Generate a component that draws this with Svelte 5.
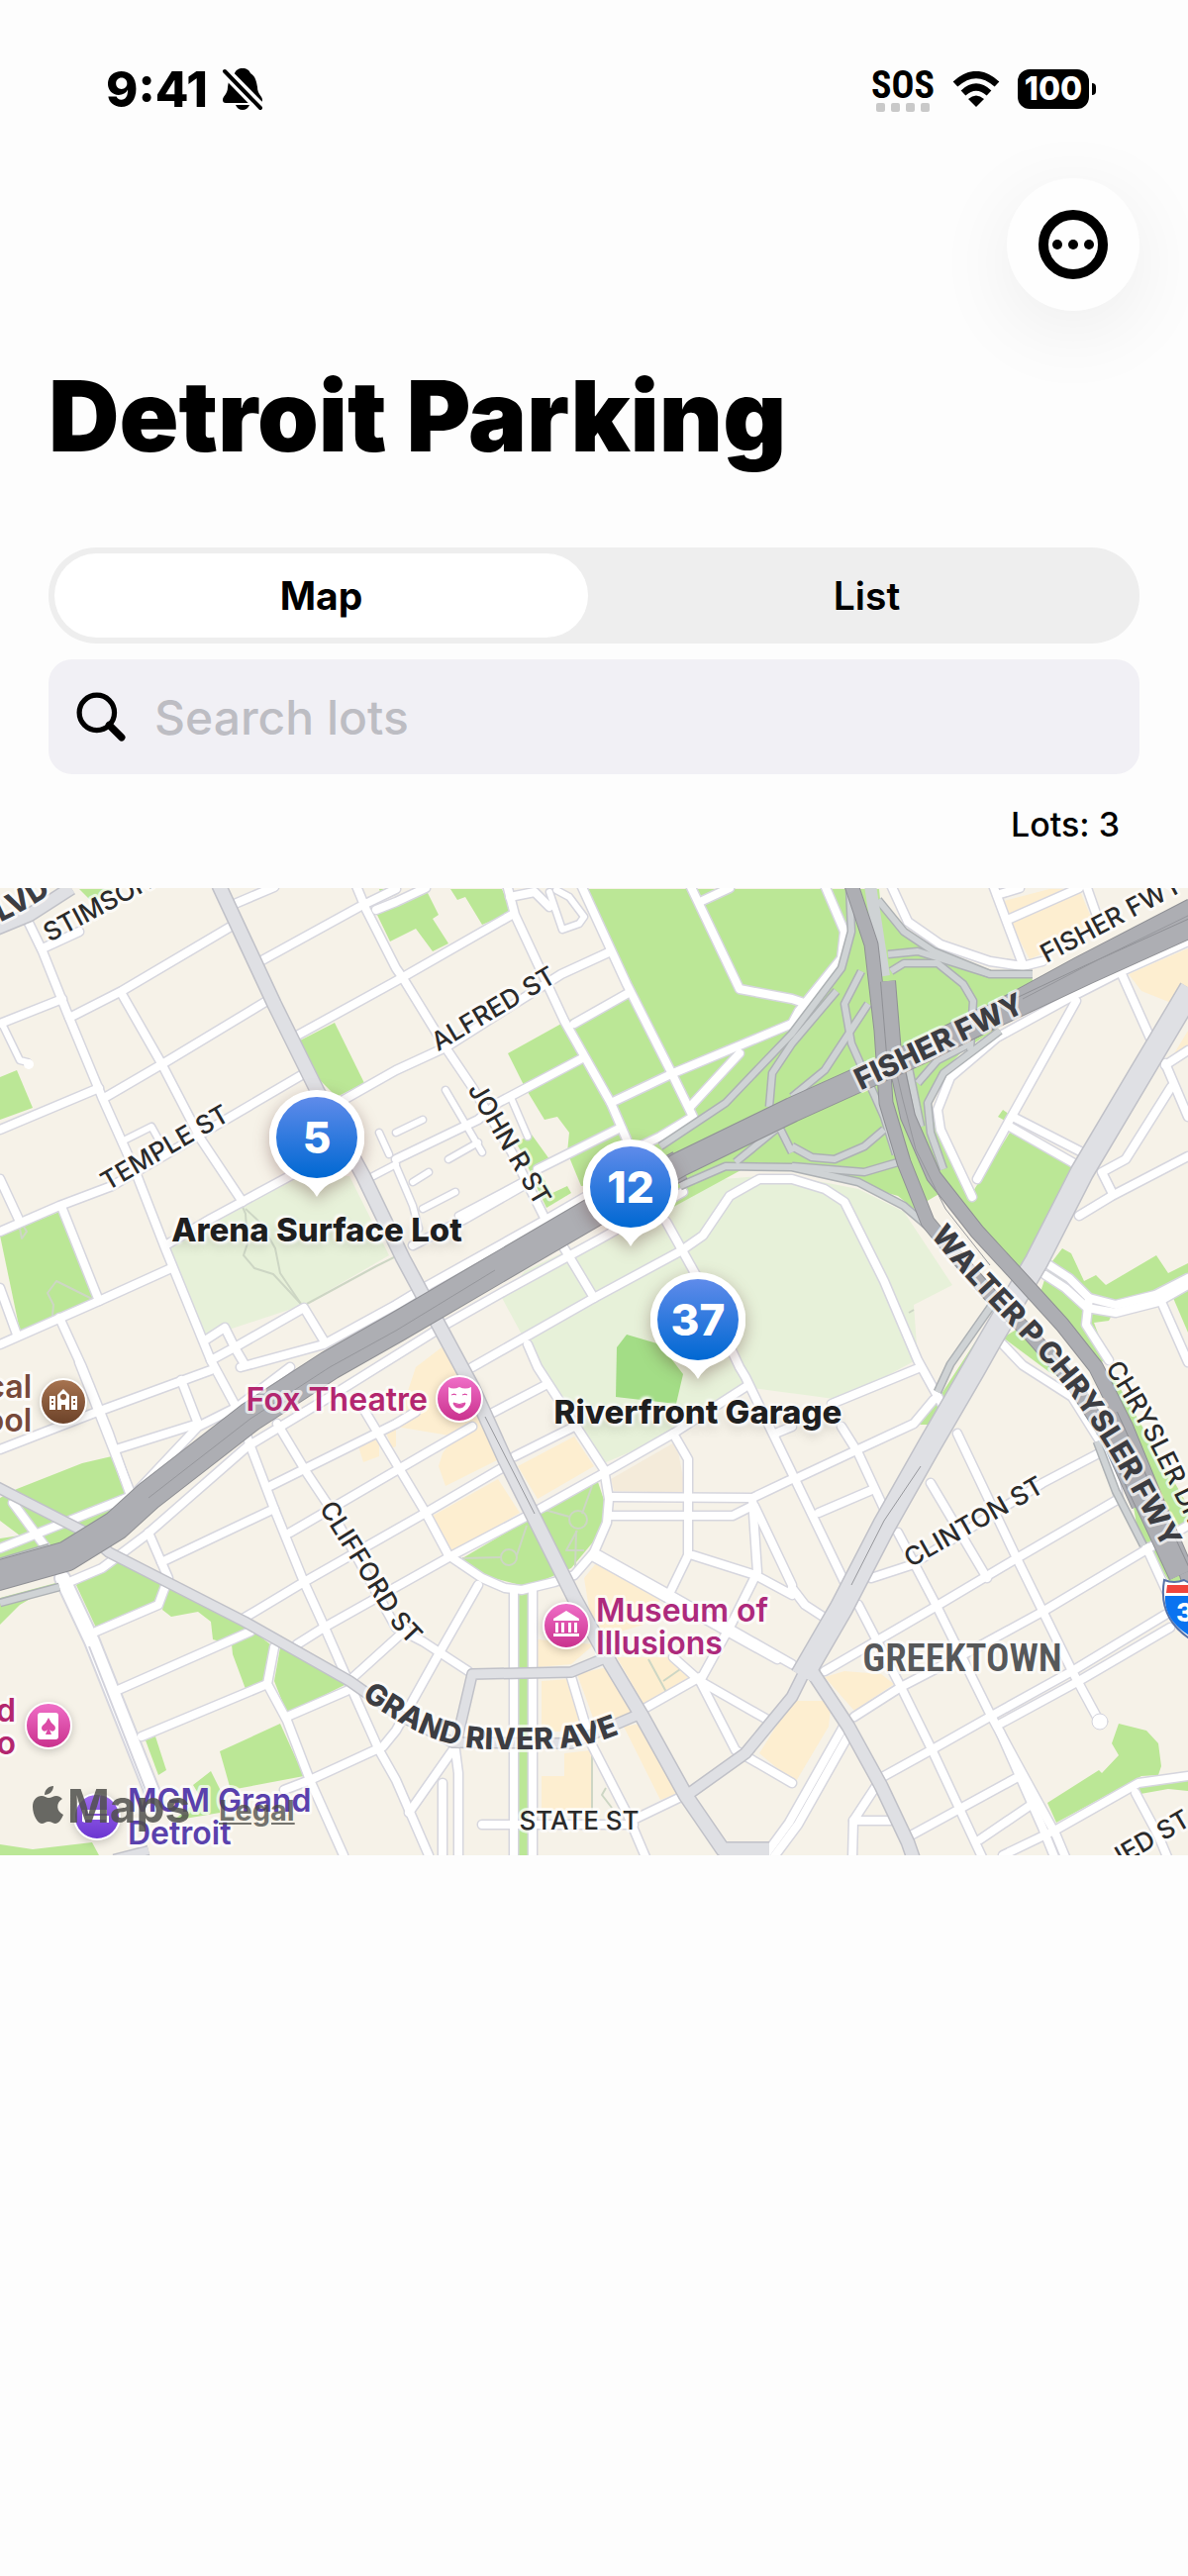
<script lang="ts">
	type Label = { id: string; text: string; d: string; size?: number; bold?: boolean; start?: boolean };

	let view = $state('map');
	let query = $state('');

	/* Map geometry shares one 1200 x 977 tile, starting at y = 896 */
	const mapTop = 896;
	const mapHeight = 977;

	const lots = [
		{ name: 'Arena Surface Lot', count: 5, x: 320, y: 1148, showName: true },
		{ name: 'Fisher Lot', count: 12, x: 637, y: 1198, showName: false },
		{ name: 'Riverfront Garage', count: 37, x: 705, y: 1332, showName: true }
	];

	const fields = [
		'170,1260 300,1187 353,1187 393,1267 307,1317 207,1350',
		'507,1310 530,1283 690,1205 730,1190 767,1187 800,1187 867,1200 913,1223 962,1297 923,1317 927,1372 850,1413 753,1400 680,1447 610,1477 527,1347'
	];

	const parks = [
		'80,897 117,897 93,910',
		'380,921 430,897 443,923 437,927 453,952 437,960 420,937 394,950',
		'383,897 400,897 400,903 386,906',
		'455,897 462,908 470,905 487,933 517,920 507,897',
		'587,897 888,897 890,917 933,953 1000,983 1040,980 1050,1010 973,1060 947,1087 937,1113 947,1143 980,1207 1020,1143 1090,1180 1033,1287 957,1200 923,1220 907,1207 800,1177 763,1173 640,1240 610,1195 587,1197 573,1163 575,1143 563,1127 550,1130 530,1097 513,1063 567,1033 634,1003',
		'521,1153 537,1145 555,1170 545,1183 558,1204 573,1197 577,1204 552,1219 543,1200 527,1163',
		'303,1050 338,1032 368,1093 340,1107 320,1087',
		'0,1087 17,1080 33,1118 0,1130',
		'0,1247 60,1223 97,1310 20,1343',
		'17,1503 83,1477 113,1470 133,1510 125,1530 60,1560 0,1580 0,1553 20,1550 0,1535 0,1512',
		'77,1600 113,1575 167,1597 160,1620 97,1643',
		'170,1600 247,1640 277,1663 267,1697 248,1705 235,1670 234,1660 215,1655 213,1637 200,1627 173,1632 164,1625',
		'283,1663 350,1700 290,1730 277,1697',
		'147,1757 157,1753 168,1787 160,1792',
		'222,1768 283,1740 307,1793 233,1807',
		'213,1788 195,1802 203,1815 175,1838 222,1830 224,1810',
		'0,1640 20,1620 60,1597 0,1613',
		'0,1862 33,1867 93,1860 100,1873 0,1873',
		'1008,1127 1013,1120 1020,1125 1017,1132',
		'1050,1307 1060,1277 1073,1260 1082,1265 1095,1293 1107,1287 1117,1297 1168,1267 1180,1285 1200,1275 1200,1290 1167,1310 1127,1320 1120,1333 1105,1335 1120,1375 1100,1373',
		'1185,1310 1200,1300 1200,1345',
		'1003,1327 985,1360 945,1438 928,1438 947,1413',
		'1013,1350 1030,1340 1080,1395 1060,1385',
		'1143,1510 1160,1520 1199,1597 1185,1602 1150,1550',
		'1110,1380 1125,1390 1200,1520 1200,1545 1185,1540',
		'1130,1740 1158,1747 1170,1760 1173,1783 1170,1792 1153,1793 1067,1840 1058,1820 1110,1787 1113,1790 1130,1772 1123,1760',
		'1150,1800 1200,1793 1200,1808 1180,1806 1152,1811',
		'467,1573 603,1493 612,1520 607,1547 577,1583 533,1602 487,1590',
		'523,1605 533,1605 533,1873 523,1873'
	];

	const shops = [
		'400,1440 420,1380 450,1357 480,1400 510,1470 450,1500 443,1480 447,1467 460,1450',
		'437,1530 503,1493 525,1527 457,1567',
		'523,1480 580,1450 600,1480 543,1513',
		'590,1593 603,1577 670,1610 650,1640 600,1655',
		'543,1655 600,1660 577,1680 543,1683',
		'583,1690 613,1683 643,1730 603,1745',
		'547,1697 575,1695 590,1748 547,1748',
		'570,1770 597,1767 598,1827 547,1827 547,1793 570,1793',
		'630,1743 647,1740 687,1810 667,1817',
		'623,1673 683,1673 700,1693 650,1720',
		'360,1453 383,1450 383,1470 367,1476',
		'388,1440 400,1430 400,1460 396,1462',
		'1010,910 1060,897 1090,897 1107,937 1040,968 1020,930',
		'1140,983 1200,957 1200,1000 1183,1012 1153,1000',
		'1200,1040 1180,1073 1200,1062',
		'833,1693 853,1687 890,1690 903,1700 863,1727',
		'767,1770 800,1717 840,1717 837,1743 803,1800'
	];

	const streets = [
		'27,927 43,960 67,1020 103,1107 137,1183 167,1260 213,1373 240,1423 253,1460 277,1523 307,1597 328,1643 353,1700 383,1767 400,1797 433,1873',
		'123,1003 163,1073 203,1150 245,1213',
		'43,957 80,940',
		'70,1027 123,1000 233,935',
		'0,1033 63,1008',
		'107,1107 167,1072 273,1008',
		'0,1140 100,1098',
		'0,1243 60,1217 113,1197 233,1127 308,1083',
		'237,912 277,895',
		'263,970 363,915 400,897',
		'380,918 400,910 430,896',
		'360,894 370,918 400,977 407,987 450,1057 477,1097 517,1163 553,1235 570,1260 600,1310',
		'300,1045 400,990 517,923',
		'347,1110 400,1080 450,1057 567,983 617,960',
		'167,1257 213,1230 300,1183',
		'63,1220 100,1313',
		'0,1357 100,1313 173,1280',
		'0,1190 20,1233',
		'0,1300 17,1347',
		'60,1330 83,1380 110,1447 133,1513',
		'207,1353 227,1340 237,1360 213,1373',
		'237,1360 307,1320 327,1353',
		'237,1360 247,1377',
		'243,1380 327,1357 400,1317 433,1297 553,1230 610,1197',
		'513,896 520,923 570,1030 617,1113 633,1150',
		'515,905 540,900 555,915',
		'587,893 633,993 677,1080 700,1127 667,1147 640,1160',
		'697,893 747,998 800,1008 812,1012',
		'617,1113 680,1083 800,1033 807,1020 850,967 853,940 833,893',
		'747,1063 697,1117',
		'580,1033 633,1003',
		'400,1170 483,1130 503,1113 590,1067',
		'543,1180 623,1140',
		'707,910 737,896',
		'417,1257 470,1230 540,1190',
		'450,1337 510,1303 607,1250 690,1203',
		'477,1380 600,1310 687,1263 710,1247 737,1207 767,1190 800,1190 833,1200 853,1213 893,1293 927,1373 953,1420',
		'673,1233 703,1287 747,1380 753,1390 800,1487 853,1597',
		'533,1357 543,1380 610,1483 615,1513 613,1537 600,1567 580,1590 560,1597 527,1605 510,1603 487,1593 453,1570 430,1527 400,1477 360,1410',
		'280,1437 310,1487 330,1517 400,1643 427,1657 473,1687',
		'0,1463 93,1427 213,1383',
		'117,1463 200,1437',
		'183,1393 200,1437',
		'80,1375 133,1510',
		'137,1507 200,1440 240,1420 293,1380',
		'70,1597 103,1583 147,1550 250,1460 333,1410 450,1337',
		'0,1563 133,1510',
		'13,1517 47,1563',
		'163,1577 277,1523',
		'150,1547 170,1593 160,1620 97,1647',
		'273,1500 400,1437 420,1425',
		'293,1547 430,1467 477,1440',
		'247,1633 307,1597 430,1527 510,1480',
		'300,1660 327,1643 457,1570 533,1530 610,1487 680,1447 753,1400',
		'520,1470 580,1440',
		'490,1430 553,1397',
		'357,1693 410,1645',
		'117,1707 253,1647',
		'143,1753 270,1700',
		'277,1663 270,1700 290,1737 313,1797 347,1873',
		'290,1733 350,1707',
		'287,1807 313,1797 387,1763 400,1747 443,1670 483,1600',
		'900,893 917,930 950,953 1000,970 1033,975 1053,970',
		'1003,893 1033,973',
		'1007,903 1030,896',
		'1020,927 1090,896',
		'1097,893 1110,930',
		'1200,950 1133,980 1080,1007 1007,1047 960,1087 947,1120 950,1140 982,1208',
		'1087,1010 1020,1130 987,1190',
		'1133,983 1163,1050',
		'1023,1127 1097,1165',
		'1020,1137 1090,1177',
		'1177,1073 1200,1127',
		'1177,1075 1200,1060',
		'1183,1097 1137,1170 1113,1183 1123,1203',
		'1090,1227 1123,1207 1200,1167',
		'1060,1277 1080,1290 1100,1310 1127,1317 1167,1307 1200,1290',
		'1056,1287 1076,1300 1098,1320 1127,1325 1170,1314 1200,1297',
		'1100,1310 1097,1337 1120,1373',
		'1170,1307 1200,1375',
		'1013,1357 1033,1378 1083,1410 1110,1453 1127,1497 1130,1513 1027,1573 943,1623 833,1687',
		'880,1593 920,1580 1053,1497 1110,1467',
		'863,1733 910,1703 987,1663 1053,1627 1160,1563 1200,1540',
		'893,1793 940,1767 1000,1733 1083,1687 1177,1630',
		'1007,1742 1088,1698 1182,1643',
		'920,1853 1030,1793',
		'990,1857 1040,1823',
		'1013,1873 1067,1847 1150,1800 1200,1793',
		'967,1447 1027,1573 1083,1687 1110,1737',
		'940,1497 997,1593',
		'907,1547 947,1623 1000,1730 1027,1780 1067,1853 1077,1877',
		'1010,1748 1053,1845 1066,1877',
		'867,1620 910,1703 943,1770 993,1877',
		'850,1440 867,1467 893,1523',
		'803,1493 867,1463 923,1437 943,1413',
		'840,1417 930,1380',
		'827,1527 883,1503',
		'800,1603 813,1620 833,1633',
		'862,1838 903,1838',
		'861,1877 862,1838 887,1800',
		'852,1743 797,1840 770,1877',
		'858,1750 806,1842 780,1877',
		'1158,1562 1180,1610',
		'1147,1810 1170,1853 1180,1877',
		'617,1511 760,1512 800,1493',
		'617,1530 740,1530 760,1520',
		'680,1447 695,1473 695,1570 677,1607',
		'700,1570 763,1590 800,1610',
		'760,1513 765,1587 740,1637 707,1697',
		'762,1520 800,1600',
		'600,1567 677,1610 800,1680',
		'600,1572 677,1615 785,1675',
		'680,1673 707,1697 743,1767 800,1800',
		'707,1697 777,1737',
		'647,1727 707,1693',
		'577,1693 597,1760 633,1830 653,1877',
		'640,1837 690,1813',
		'487,1842 640,1842',
		'519,1605 519,1877',
		'538,1605 538,1877',
		'413,1830 460,1763',
		'460,1767 463,1790 463,1877',
		'447,1800 447,1877',
		'783,1447 800,1440'
	];

	const alleys = [
		'3,1035 20,1070 28,1072',
		'127,1150 153,1137 163,1155',
		'450,1100 487,1163',
		'453,1170 483,1153',
		'400,1143 427,1130',
		'400,1177 417,1217 423,1240',
		'417,1193 433,1183',
		'427,1220 460,1203',
		'517,1110 533,1147',
		'463,1227 527,1193',
		'383,1143 393,1165',
		'377,1187 400,1175',
		'555,900 568,938 585,932 590,925 575,905 562,898'
	];

	const avenues = [
		{ points: '-4,937 30,923 72,896', width: 12 },
		{ points: '221,893 277,1013 320,1100 367,1187 407,1270 443,1337 477,1400 510,1473 540,1533 580,1613 617,1680 647,1730 693,1813 730,1867 777,1867', width: 13 },
		{ points: '-3,1501 87,1547 110,1567 247,1637 353,1697 400,1730 457,1759 577,1760 647,1730', width: 9 },
		{ points: '460,1763 477,1690 577,1688 613,1673', width: 9 },
		{ points: '813,1687 800,1713 753,1770 697,1810', width: 10 },
		{ points: '820,1687 857,1743 890,1803 917,1860 924,1880', width: 12 },
		{ points: '1203,998 1150,1087 1093,1183 1047,1273 1000,1353 983,1383 940,1457 893,1540 850,1623 810,1692', width: 22 },
		{ points: '115,1877 150,1868', width: 8 }
	];

	const ramps = [
		'667,1157 733,1113 800,1043 850,977 860,940 858,893',
		'777,1117 780,1083 800,1053 845,1000',
		'887,908 913,940 943,960 1000,983 1043,983',
		'897,963 927,960 1000,983',
		'900,980 913,972 947,972 973,993 983,1010 980,1060',
		'870,980 853,1013 860,1053 893,1127 905,1165',
		'877,1013 833,1080 800,1107',
		'800,1157 820,1168 843,1170 873,1157 893,1140',
		'800,1177 873,1183 907,1173',
		'687,1197 733,1177 800,1178 867,1193 913,1217 940,1240',
		'743,1173 787,1137 800,1163',
		'927,1093 947,1070 980,1053',
		'1010,1040 953,1083 937,1113 940,1143 953,1180',
		'917,1073 930,1137',
		'1007,1310 960,1377 947,1405',
		'0,1577 50,1562',
		'0,1618 60,1602',
		'1108,1455 1127,1505 1155,1560'
	];

	const freeways = [
		{ points: '860,893 880,953 890,1040 895,1113 913,1173 937,1233 960,1261 1000,1307 1040,1346 1083,1395 1120,1453 1150,1520', width: 13 },
		{ points: '897,990 903,1063 917,1127 943,1187 987,1243 1033,1293 1073,1337 1107,1380 1137,1440 1167,1513 1197,1583 1215,1640', width: 14 },
		{ points: '1118,1430 1150,1500 1192,1590', width: 22 },
		{ points: '-4,1591 67,1571 117,1540 150,1510 253,1430 333,1378 400,1340 600,1223 687,1176', width: 29 },
		{ points: '940,1055 1000,1024 1090,975 1204,916', width: 18 },
		{ points: '940,1059 1000,1030 1100,983 1204,936', width: 18 },
		{ points: '675,1182 687,1175 800,1120 933,1060 1000,1026', width: 24 }
	];

	const footpaths = [
		'245,1218 248,1225 250,1255 246,1267 257,1280 276,1286 304,1316',
		'248,1220 264,1235 278,1260 283,1285 304,1316',
		'310,1316 380,1278 400,1268',
		'53,1328 54,1317 48,1305 57,1293 93,1311',
		'20,1240 22,1250 27,1243 24,1238',
		'467,1573 506,1572',
		'522,1570 532,1540',
		'550,1524 575,1531',
		'588,1528 598,1500',
		'582,1545 581,1583',
		'583,1545 572,1565 590,1565',
		'655,1675 673,1708',
		'670,1697 690,1683',
		'598,1770 598,1827',
		'612,1805 608,1812 618,1825',
		'923,1322 918,1325'
	];

	const seams = [
		'150,1512 253,1432 333,1380 400,1343 500,1282',
		'1033,1008 1110,968 1204,922',
		'905,1080 912,1110 925,1160 955,1220 1000,1277',
		'930,1480 893,1535 860,1600',
		'490,1430 540,1528'
	];

	const labels: Label[] = [
		{ id: 'blvd', text: 'BLVD', d: 'M-18,938 Q30,920 85,878', size: 30, bold: true, start: true },
		{ id: 'stimson', text: 'STIMSON', d: 'M50,951 L190,876', start: true },
		{ id: 'temple', text: 'TEMPLE ST', d: 'M102,1206 L240,1126' },
		{ id: 'alfred', text: 'ALFRED ST', d: 'M436,1065 L570,986' },
		{ id: 'john', text: 'JOHN R ST', d: 'M469,1094 L545,1224' },
		{ id: 'clifford', text: 'CLIFFORD ST', d: 'M317,1514 L385,1624 Q397,1645 422,1668' },
		{ id: 'clinton', text: 'CLINTON ST', d: 'M914,1586 L1062,1502' },
		{ id: 'fisher-dr', text: 'FISHER FWY', d: 'M1057,972 L1225,883', start: true },
		{ id: 'fisher', text: 'FISHER FWY', d: 'M858,1106 L1048,1015', size: 30, bold: true },
		{ id: 'chrysler', text: 'WALTER P CHRYSLER FWY', d: 'M930,1234 C985,1308 1040,1350 1085,1412 S1150,1520 1184,1578', size: 30, bold: true },
		{ id: 'chrysler-dr', text: 'CHRYSLER DR', d: 'M1116,1381 C1150,1430 1175,1485 1225,1590', start: true },
		{ id: 'grand-river', text: 'GRAND RIVER AVE', d: 'M352,1705 C400,1738 440,1766 500,1766 S590,1768 640,1744', size: 30, bold: true },
		{ id: 'state', text: 'STATE ST', d: 'M510,1847 L660,1847' },
		{ id: 'alfred-east', text: 'IED ST', d: 'M1133,1883 L1240,1821', start: true }
	];
</script>

<div class="screen">
	<div class="status-bar">
		<div class="status-group">
			<span class="time">9:41</span>
			<svg class="bell" viewBox="0 0 42 44" aria-label="Silent">
				<path
					d="M21 1c4 0 7 2 8 5 5 3 6 8 7 14 0 7 5 9 5 13 0 2-1 3-3 3H4c-2 0-3-1-3-3 0-4 5-6 5-13 1-6 2-11 7-14 1-3 4-5 8-5zM14 38h14c-1 3-4 5-7 5s-6-2-7-5z"
				/>
				<path d="M0 1 44 46" class="bell-gap" />
				<path d="M3 4 39 41" class="bell-slash" />
			</svg>
		</div>
		<div class="status-group signals">
			<div class="sos">
				<span>SOS</span>
				<div class="dots"><i></i><i></i><i></i><i></i></div>
			</div>
			<svg class="wifi" viewBox="0 0 48 37" aria-label="Wi-Fi">
				<path d="M3 13Q24-6 45 13" />
				<path d="M11 22Q24 10 37 22" />
				<path d="M24 36 16 28Q24 21 32 28z" class="solid" />
			</svg>
			<div class="battery"><span>100</span></div>
		</div>
	</div>

	<div class="toolbar">
		<button class="more" aria-label="More">
			<svg viewBox="0 0 72 72">
				<circle cx="36" cy="36" r="30" class="ring" />
				<circle cx="20" cy="36" r="5" />
				<circle cx="36" cy="36" r="5" />
				<circle cx="52" cy="36" r="5" />
			</svg>
		</button>
	</div>

	<h1>Detroit Parking</h1>

	<div class="controls">
		<div class="segments">
			<button class:active={view === 'map'} onclick={() => (view = 'map')}>Map</button>
			<button class:active={view === 'list'} onclick={() => (view = 'list')}>List</button>
		</div>
		<label class="search">
			<svg viewBox="0 0 48 48" aria-hidden="true">
				<circle cx="20" cy="20" r="17" />
				<path d="M32 32 44 44" class="handle" />
			</svg>
			<input type="text" placeholder="Search lots" aria-label="Search lots" bind:value={query} />
		</label>
		<p class="lot-count">Lots: {lots.length}</p>
	</div>

	<div class="map">
		<svg class="tile" viewBox="0 {mapTop} 1200 {mapHeight}">
			<defs>
				<linearGradient id="pink" x1="0" y1="0" x2="0" y2="1">
					<stop offset="0" stop-color="#f06fc8" />
					<stop offset="1" stop-color="#c9308c" />
				</linearGradient>
				<linearGradient id="brown" x1="0" y1="0" x2="0" y2="1">
					<stop offset="0" stop-color="#a87450" />
					<stop offset="1" stop-color="#6b4128" />
				</linearGradient>
				<linearGradient id="purple" x1="0" y1="0" x2="0" y2="1">
					<stop offset="0" stop-color="#a06cf0" />
					<stop offset="1" stop-color="#6a34d0" />
				</linearGradient>
				{#each labels as label}
					<path id={label.id} d={label.d} />
				{/each}
			</defs>

			<rect x="0" y={mapTop} width="1200" height={mapHeight} fill="#f6f2e8" />

			{#each fields as points}
				<polygon {points} fill="#e7f1d9" />
			{/each}
			<polygon points="617,1493 683,1455 693,1507 620,1505" fill="#f4ebda" />
			{#each shops as points}
				<polygon {points} fill="#fdeed0" />
			{/each}
			{#each parks as points}
				<polygon {points} fill="#bbe796" />
			{/each}
			<polygon points="633,1347 667,1357 690,1387 683,1417 622,1410 623,1360" fill="#a3dd86" />
			<g class="footpaths">
				{#each footpaths as points}
					<polyline {points} />
				{/each}
				<circle cx="514" cy="1572" r="8" />
				<circle cx="584" cy="1534" r="9" />
			</g>

			<g class="casing">
				{#each alleys as points}
					<polyline {points} stroke-width="9" />
				{/each}
				{#each streets as points}
					<polyline {points} stroke-width="11" />
				{/each}
				<polyline points="63,1593 93,1657 158,1820" stroke-width="18" />
			</g>
			<g class="street">
				{#each alleys as points}
					<polyline {points} stroke-width="6" />
				{/each}
				{#each streets as points}
					<polyline {points} stroke-width="8" />
				{/each}
				<polyline points="63,1593 93,1657 158,1820" stroke-width="14" />
				<circle cx="1111" cy="1738" r="8" fill="#fff" stroke="#d3d3dc" />
				<circle cx="29" cy="1074" r="5" fill="#fff" stroke="none" />
			</g>
			<polyline points="90,1662 152,1820" fill="none" stroke="#d3d3dc" stroke-width="2" />

			<g class="avenue-casing">
				{#each avenues as road}
					<polyline points={road.points} stroke-width={road.width + 3} />
				{/each}
			</g>
			<g class="avenue">
				{#each avenues as road}
					<polyline points={road.points} stroke-width={road.width} />
				{/each}
			</g>

			<g class="ramp-casing">
				{#each ramps as points}
					<polyline {points} />
				{/each}
			</g>
			<g class="ramp">
				{#each ramps as points}
					<polyline {points} />
				{/each}
				<polyline points="879,893 893,985" stroke-width="12" />
			</g>

			{#each freeways as road}
				<polyline points={road.points} class="freeway-edge" stroke-width={road.width + 2} />
				<polyline points={road.points} class="freeway" stroke-width={road.width} />
			{/each}
			<g class="seams">
				{#each seams as points}
					<polyline {points} />
				{/each}
			</g>

			{#each labels as label}
				<text class="road-label" class:bold={label.bold} font-size={label.size ?? 26}>
					<textPath
						href="#{label.id}"
						startOffset={label.start ? '0%' : '50%'}
						text-anchor={label.start ? 'start' : 'middle'}>{label.text}</textPath
					>
				</text>
			{/each}
			<text class="district" x="972" y="1687" text-anchor="middle">GREEKTOWN</text>

			<g class="shield">
				<path
					d="M1176 1595q10 4 20 0 8 5 20 5 12 0 20-5 8 5 20 0 10 42-40 67-48-22-40-67z"
					fill="#fff"
					stroke="#5873a8"
					stroke-width="2"
				/>
				<path d="M1179 1600h80v8h-81z" fill="#f0443c" />
				<path d="M1177 1611h84q-1 32-42 49-44-18-42-49z" fill="#0a73f0" />
				<text x="1188" y="1637">375</text>
			</g>

			<g class="poi">
				<circle cx="64" cy="1415" r="23" fill="url(#brown)" />
				<path
					d="M50 1409h6v14h-6zM72 1409h6v14h-6zM58 1423v-15l6-6 6 6v15h-4v-5h-4v5z"
					fill="#fff"
				/>
				<circle cx="64" cy="1410" r="3" fill="#8a5a3c" />
				<path d="M52 1413h2M52 1417h2M74 1413h2M74 1417h2" stroke="#8a5a3c" stroke-width="2" />
				<text x="32" y="1411" text-anchor="end" fill="#77493a">cal</text>
				<text x="32" y="1445" text-anchor="end" fill="#77493a">ool</text>

				<circle cx="464" cy="1412" r="23" fill="url(#pink)" />
				<path d="M453 1400q5 3 11 0 6 3 12 0v14q-1 9-12 13-10-4-11-13z" fill="#fff" />
				<path
					d="M456 1408q3-2 5 0M467 1408q3-2 5 0M458 1416q6 3 12 0-1 5-6 5-5 0-6-5z"
					fill="#dc4aa6"
					stroke="#dc4aa6"
				/>
				<text x="432" y="1424" text-anchor="end" fill="#b3266f">Fox Theatre</text>

				<circle cx="572" cy="1641" r="23" fill="url(#pink)" />
				<path
					d="M559 1634 572 1626l13 8v2h-26zM561 1638h3v10h-3zM567 1638h3v10h-3zM574 1638h3v10h-3zM580 1638h3v10h-3zM559 1649h26v3h-26z"
					fill="#fff"
				/>
				<text x="602" y="1637" fill="#ad2a7c">Museum of</text>
				<text x="602" y="1670" fill="#ad2a7c">Illusions</text>

				<circle cx="49" cy="1742" r="23" fill="url(#pink)" />
				<rect x="38" y="1729" width="21" height="27" rx="3" fill="#fff" />
				<path
					d="M49 1734q2 5 6 8c3 4-2 8-5 4l2 5h-6l2-5c-3 4-8 0-5-4q4-3 6-8z"
					fill="#dc4aa6"
				/>
				<text x="16" y="1738" text-anchor="end" fill="#b3266f">d</text>
				<text x="16" y="1771" text-anchor="end" fill="#b3266f">o</text>

				<circle cx="98" cy="1834" r="23" fill="url(#purple)" />
				<path d="M83 1839v-12h3v6h24v7h-3v-3H86v3zM88 1827h20v4H88z" fill="#fff" />
				<text x="129" y="1829" fill="#5a41ad">MGM Grand</text>
				<text x="129" y="1862" fill="#5a41ad">Detroit</text>
			</g>

			<g class="attribution">
				<path
					d="M54 1803c0 5-4 9-9 9 0-5 4-9 9-9zM49 1815c3 0 5-2 8-2 2 0 4 1 6 3-7 4-6 13 1 16-2 5-5 9-8 9-2 0-4-2-7-2s-4 2-7 2c-4 0-9-9-9-17 0-7 4-11 9-11 3 0 5 2 7 2z"
				/>
				<text x="68" y="1840">Maps</text>
			</g>
		</svg>

		<a class="legal" href="#legal">Legal</a>

		{#each lots as lot}
			<button
				class="pin"
				aria-label={lot.name}
				style="left: {lot.x / 12}%; top: {((lot.y - mapTop) / mapHeight) * 100}%"
			>
				<svg viewBox="0 0 96 112" aria-hidden="true">
					<path d="M48 0a48 48 0 0 1 17 93q-10 3-17 15-7-12-17-15A48 48 0 0 1 48 0z" />
				</svg>
				<span class="count">{lot.count}</span>
				{#if lot.showName}
					<span class="lot-name">{lot.name}</span>
				{/if}
			</button>
		{/each}
	</div>
</div>

<style>
	:global(body) {
		margin: 0;
		background: #fdfdfd;
	}

	.screen {
		min-height: 100vh;
		background: #fdfdfd;
		color: #000;
		font-family: Inter, 'Liberation Sans', sans-serif;
	}

	button {
		border: 0;
		padding: 0;
		background: none;
		color: inherit;
		font-family: inherit;
		cursor: pointer;
	}

	.status-bar {
		display: flex;
		justify-content: space-between;
		align-items: center;
		height: 180px;
		padding: 0 93px 0 107px;
		box-sizing: border-box;
	}

	.status-group {
		display: flex;
		align-items: center;
		gap: 14px;
	}

	.signals {
		gap: 18px;
	}

	.time {
		font-size: 49px;
		font-weight: 800;
	}

	.bell {
		width: 42px;
		height: 44px;
	}

	.bell-gap {
		stroke: #fdfdfd;
		stroke-width: 11;
	}

	.bell-slash {
		stroke: #000;
		stroke-width: 4;
		stroke-linecap: round;
	}

	.sos {
		display: flex;
		flex-direction: column;
		align-items: center;
		font-family: 'Liberation Sans Narrow', 'Roboto Condensed', Roboto, sans-serif;
		font-size: 38px;
		font-weight: 700;
		line-height: 36px;
	}

	.dots {
		display: flex;
		gap: 6px;
	}

	.dots i {
		width: 9px;
		height: 9px;
		border-radius: 2px;
		background: #c9c9c9;
	}

	.wifi {
		width: 48px;
		height: 37px;
		fill: none;
		stroke: #000;
		stroke-width: 7;
	}

	.wifi .solid {
		fill: #000;
		stroke: none;
	}

	.battery {
		position: relative;
		width: 72px;
		height: 40px;
		margin-right: 7px;
		border-radius: 12px;
		background: #000;
		color: #fff;
		font-size: 32px;
		font-weight: 800;
		line-height: 40px;
		text-align: center;
	}

	.battery::after {
		content: '';
		position: absolute;
		top: 14px;
		right: -7px;
		width: 4px;
		height: 12px;
		border-radius: 0 4px 4px 0;
		background: #000;
	}

	.toolbar {
		display: flex;
		justify-content: flex-end;
		padding: 0 49px;
	}

	.more {
		display: grid;
		place-items: center;
		width: 134px;
		height: 134px;
		border-radius: 50%;
		background: #fefefe;
		box-shadow: 0 18px 84px rgba(0, 0, 0, 0.07);
	}

	.more svg {
		width: 72px;
		height: 72px;
	}

	.ring {
		fill: none;
		stroke: #000;
		stroke-width: 10;
	}

	h1 {
		margin: 46px 49px 0;
		font-size: 99px;
		font-weight: 900;
		line-height: 120px;
	}

	.controls {
		display: flex;
		flex-direction: column;
		gap: 16px;
		margin: 73px 49px 0;
	}

	.segments {
		display: grid;
		grid-template-columns: 1fr 1fr;
		gap: 12px;
		height: 97px;
		padding: 6px;
		box-sizing: border-box;
		border-radius: 48px;
		background: #eee;
	}

	.segments button {
		border-radius: 43px;
		font-size: 39px;
		font-weight: 600;
	}

	.segments .active {
		background: #fff;
		font-weight: 700;
	}

	.search {
		display: flex;
		align-items: center;
		gap: 29px;
		height: 116px;
		padding: 0 28px;
		box-sizing: border-box;
		border-radius: 24px;
		background: #f1f0f5;
	}

	.search svg {
		flex: none;
		width: 50px;
		height: 50px;
		fill: none;
		stroke: #000;
		stroke-width: 5;
		stroke-linecap: round;
	}

	.search .handle {
		stroke-width: 7;
	}

	.search input {
		flex: 1;
		min-width: 0;
		border: 0;
		padding: 0;
		outline: 0;
		background: none;
		font-family: inherit;
		font-size: 48px;
		font-weight: 500;
	}

	.search input::placeholder {
		color: #bdbdc3;
	}

	.lot-count {
		margin: 15px 20px 44px;
		font-size: 34px;
		font-weight: 500;
		line-height: 40px;
		text-align: right;
	}

	.map {
		position: relative;
		overflow: hidden;
	}

	.tile {
		display: block;
		width: 100%;
		height: auto;
	}

	.footpaths,
	.casing,
	.street,
	.avenue-casing,
	.avenue,
	.ramp-casing,
	.ramp,
	.seams {
		fill: none;
		stroke-linejoin: round;
	}

	.footpaths {
		stroke: #cdd6c4;
		stroke-width: 2;
	}

	.casing,
	.street {
		stroke: #d6d6de;
		stroke-linecap: round;
	}

	.street {
		stroke: #fff;
	}

	.avenue-casing {
		stroke: #c0c1c8;
	}

	.avenue {
		stroke: #dfe0e4;
	}

	.ramp-casing {
		stroke: #adb1b4;
		stroke-width: 9;
	}

	.ramp {
		stroke: #cfd3d5;
		stroke-width: 6;
	}

	.freeway-edge,
	.freeway {
		fill: none;
		stroke: #8f9095;
		stroke-linejoin: round;
	}

	.freeway {
		stroke: #adaeb3;
	}

	.seams {
		stroke: #96979c;
		stroke-width: 1;
	}

	.road-label,
	.district,
	.poi text {
		paint-order: stroke;
		stroke: rgba(255, 255, 255, 0.7);
		stroke-width: 6px;
		stroke-linejoin: round;
	}

	.road-label {
		fill: #2a2a2a;
		font-weight: 500;
	}

	.road-label.bold {
		fill: #3c3d42;
		font-weight: 800;
	}

	.district {
		fill: #56585a;
		font-family: 'Roboto Condensed', Roboto, sans-serif;
		font-size: 39px;
		font-weight: 600;
	}

	.shield text {
		fill: #fff;
		font-size: 26px;
		font-weight: 800;
	}

	.poi > circle[r='23'] {
		stroke: #fff;
		stroke-width: 2;
		filter: drop-shadow(0 2px 4px rgba(0, 0, 0, 0.2));
	}

	.poi text {
		font-size: 32px;
		font-weight: 600;
	}

	.attribution {
		fill: #50504c;
		opacity: 0.85;
		font-size: 46px;
		font-weight: 700;
	}

	.legal {
		position: absolute;
		bottom: 28px;
		left: 221px;
		color: rgba(72, 72, 68, 0.75);
		font-size: 29px;
		font-weight: 700;
		line-height: 34px;
	}

	.pin {
		position: absolute;
		width: 96px;
		height: 96px;
		margin: -48px 0 0 -48px;
	}

	.pin svg {
		position: absolute;
		top: 0;
		left: 0;
		width: 96px;
		height: 112px;
		fill: #fff;
		filter: drop-shadow(0 5px 8px rgba(80, 40, 40, 0.35));
	}

	.count {
		position: relative;
		display: grid;
		place-items: center;
		width: 82px;
		height: 82px;
		margin: 7px;
		border-radius: 50%;
		background: linear-gradient(#5f8bea, #0068d2);
		color: #fff;
		font-size: 44px;
		font-weight: 800;
	}

	.lot-name {
		position: absolute;
		top: 121px;
		left: 50%;
		color: #1f1f1f;
		font-size: 33px;
		font-weight: 800;
		line-height: 40px;
		white-space: nowrap;
		text-shadow:
			0 0 4px #fff,
			0 0 4px #fff,
			2px 2px 3px #fff,
			-2px -2px 3px #fff,
			0 6px 12px rgba(0, 0, 0, 0.15);
		transform: translateX(-50%);
	}
</style>
